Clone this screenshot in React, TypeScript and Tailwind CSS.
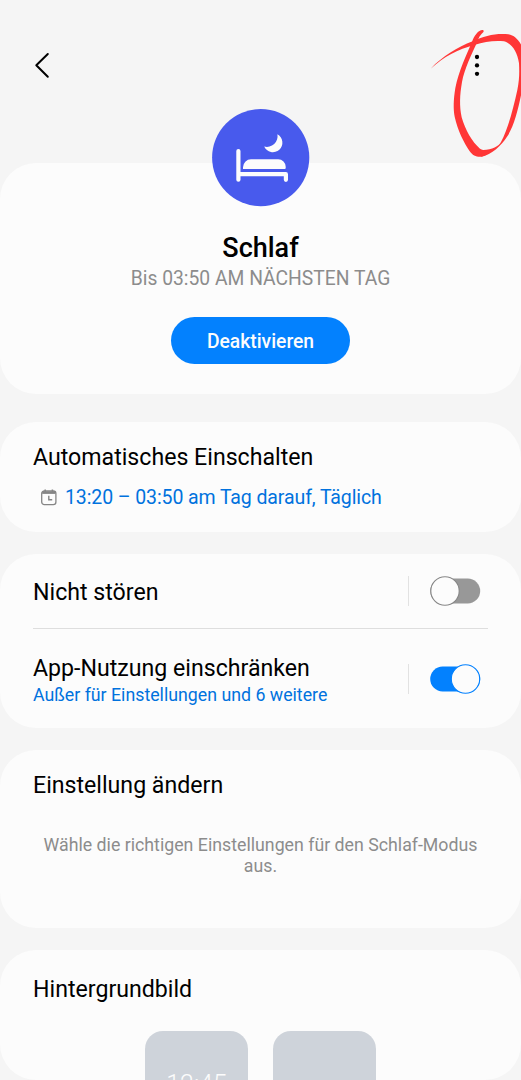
import React from "react";

type CardProps = {
  className?: string;
  children: React.ReactNode;
};

const Card: React.FC<CardProps> = ({ className = "", children }) => (
  <section className={`w-full shrink-0 rounded-[36px] bg-[#fcfcfc] ${className}`}>{children}</section>
);

const CardTitle: React.FC<{ children: React.ReactNode }> = ({ children }) => (
  <h2 className="text-[23.15px] leading-7 whitespace-nowrap text-black">{children}</h2>
);

const Toggle: React.FC<{ on: boolean }> = ({ on }) => (
  <div className="flex items-center">
    <span className="h-[30px] w-[1.5px] bg-[#e2e2e2]"></span>
    <svg className="ml-5 h-8 w-[52px]" viewBox="0 0 52 32" role="switch" aria-checked={on}>
      <rect x="1.2" y="3.5" width="50" height="25" rx="12.5" fill={on ? "#0381fe" : "#989898"} />
      <circle
        cx={on ? 36.5 : 16}
        cy="16"
        r="14.2"
        fill="#fcfcfc"
        stroke={on ? "#0381fe" : "#878787"}
        strokeWidth="1.1"
      />
    </svg>
  </div>
);

const BedIcon = () => (
  <svg className="h-[98px] w-[98px]" viewBox="0 0 98 98">
    <circle cx="48.7" cy="48.6" r="48.6" fill="#485aed" />
    <path d="M65.4 25.3A9.5 9.5 0 1 1 52.2 37.5A10.6 10.6 0 0 0 65.4 25.3Z" fill="#fcfcfc" />
    <path
      d="M26.4 42v28.7M26.4 65.2h47.5v5.6"
      fill="none"
      stroke="#fcfcfc"
      strokeWidth="4.2"
      strokeLinecap="round"
      strokeLinejoin="round"
    />
    <path
      d="M31 60v-1.7a8 8 0 0 1 8-8h27.2a7.5 7.5 0 0 1 7.5 7.5v1.2a1 1 0 0 1-1 1z"
      fill="#fcfcfc"
    />
  </svg>
);

const CalendarIcon = () => (
  <svg className="h-[18px] w-[18px]" viewBox="0 0 18 18" fill="none" stroke="#858585">
    <rect x="1.7" y="2" width="14.2" height="13.6" rx="2.6" strokeWidth="1.3" />
    <path d="M2.2 3.6h13.2" strokeWidth="2.6" />
    <path d="M5.2 .4v2.5M12.4 .4v2.5" strokeWidth="1.5" />
    <path d="M8.8 6.8v4h3.4" strokeWidth="1.4" />
  </svg>
);

const Scribble = () => (
  <svg className="absolute top-0 right-0 h-[180px] w-[121px]" viewBox="0 0 363 540" fill="#ff3636">
    <path d="M92 206C128 169 172 141 218 124C252 107 290 99 325 103C344 106 356 120 368 142L368 262C356 320 345 375 320 412C305 434 276 466 243 470L250 450C276 450 297 438 303 426C325 385 341 320 352 270C359 236 358 212 357 190C352 154 334 130 312 124C284 120 252 126 225 134C172 148 132 170 92 206Z" />
    <path d="M250 90C238 87 222 105 216 126C200 162 176 214 166 264C160 300 160 328 164 350C173 391 192 428 208 452C218 467 230 471 243 470C254 468 268 461 274 449C262 452 250 452 240 446C216 426 196 390 185 352C178 318 179 286 186 246C193 208 216 160 230 130C234 114 242 103 251 95Z" />
  </svg>
);

export default function App() {
  return (
    <div className="relative flex h-[1080px] w-[521px] flex-col overflow-hidden bg-[#f5f5f5] font-['Roboto',sans-serif]">
      <header className="flex h-[109px] shrink-0 items-start justify-between pt-[52px] pr-[41px] pl-[33px]">
        <svg className="h-[27px] w-[18px]" viewBox="0 0 18 27" fill="none" stroke="#000">
          <path d="M14.8 2L3.3 13.3L14.8 24.8" strokeWidth="2" strokeLinecap="round" strokeLinejoin="round" />
        </svg>
        <svg className="h-[27px] w-[6px]" viewBox="0 0 6 27">
          <circle cx="3" cy="5" r="2.15" />
          <circle cx="3" cy="13.4" r="2.15" />
          <circle cx="3" cy="21.8" r="2.15" />
        </svg>
      </header>

      <Card className="mt-[54px] flex h-[231px] flex-col items-center">
        <div className="-mt-[54px] h-[98px]">
          <BedIcon />
        </div>
        <h1 className="mt-[25px] text-[27px] leading-8 font-medium text-black">Schlaf</h1>
        <p className="mt-[3px] text-[19.3px] leading-6 whitespace-nowrap text-[#8c8c8c]">Bis 03:50 AM NÄCHSTEN TAG</p>
        <button className="mt-[26px] h-[47px] w-[179px] rounded-full bg-[#0381fe] pt-[3px] text-[19.3px] font-medium text-[#fcfcfc]">
          Deaktivieren
        </button>
      </Card>

      <Card className="mt-7 h-[110px] px-[33px] pt-[22px]">
        <CardTitle>Automatisches Einschalten</CardTitle>
        <div className="mt-[13px] flex items-center pl-[7px]">
          <CalendarIcon />
          <span className="ml-[7px] pt-px text-[19.5px] leading-6 tracking-[-0.1px] whitespace-nowrap text-[#0072de]">
            13:20 – 03:50 am Tag darauf, Täglich
          </span>
        </div>
      </Card>

      <Card className="mt-[22px] h-[174px] pr-[33px] pl-[33px]">
        <div className="flex h-[75px] items-center justify-between border-b border-[#dedede] pr-[7px]">
          <div className="pt-[3px]">
            <CardTitle>Nicht stören</CardTitle>
          </div>
          <Toggle on={false} />
        </div>
        <div className="flex h-[99px] items-center justify-between pr-[7px]">
          <div className="pt-[5px]">
            <CardTitle>App-Nutzung einschränken</CardTitle>
            <p className="text-[17.75px] leading-6 whitespace-nowrap text-[#0072de]">
              Außer für Einstellungen und 6 weitere
            </p>
          </div>
          <Toggle on />
        </div>
      </Card>

      <Card className="mt-[22px] h-[178px] px-[33px] pt-[22px]">
        <CardTitle>Einstellung ändern</CardTitle>
        <p className="mt-[35px] text-center text-[17.75px] leading-[21px] text-[#8c8c8c]">
          Wähle die richtigen Einstellungen für den Schlaf-Modus aus.
        </p>
      </Card>

      <Card className="mt-[22px] h-[130px] overflow-hidden px-[33px] pt-[26px]">
        <CardTitle>Hintergrundbild</CardTitle>
        <div className="mt-[27px] flex justify-center gap-[25px]">
          <div className="h-[200px] w-[103px] rounded-[18px] bg-[#ced3da] pt-10 text-center text-[25px] leading-7 font-light text-[#fcfcfc]">
            12:45
          </div>
          <div className="h-[200px] w-[103px] rounded-[18px] bg-[#ced3da]"></div>
        </div>
      </Card>

      <Scribble />
    </div>
  );
}
